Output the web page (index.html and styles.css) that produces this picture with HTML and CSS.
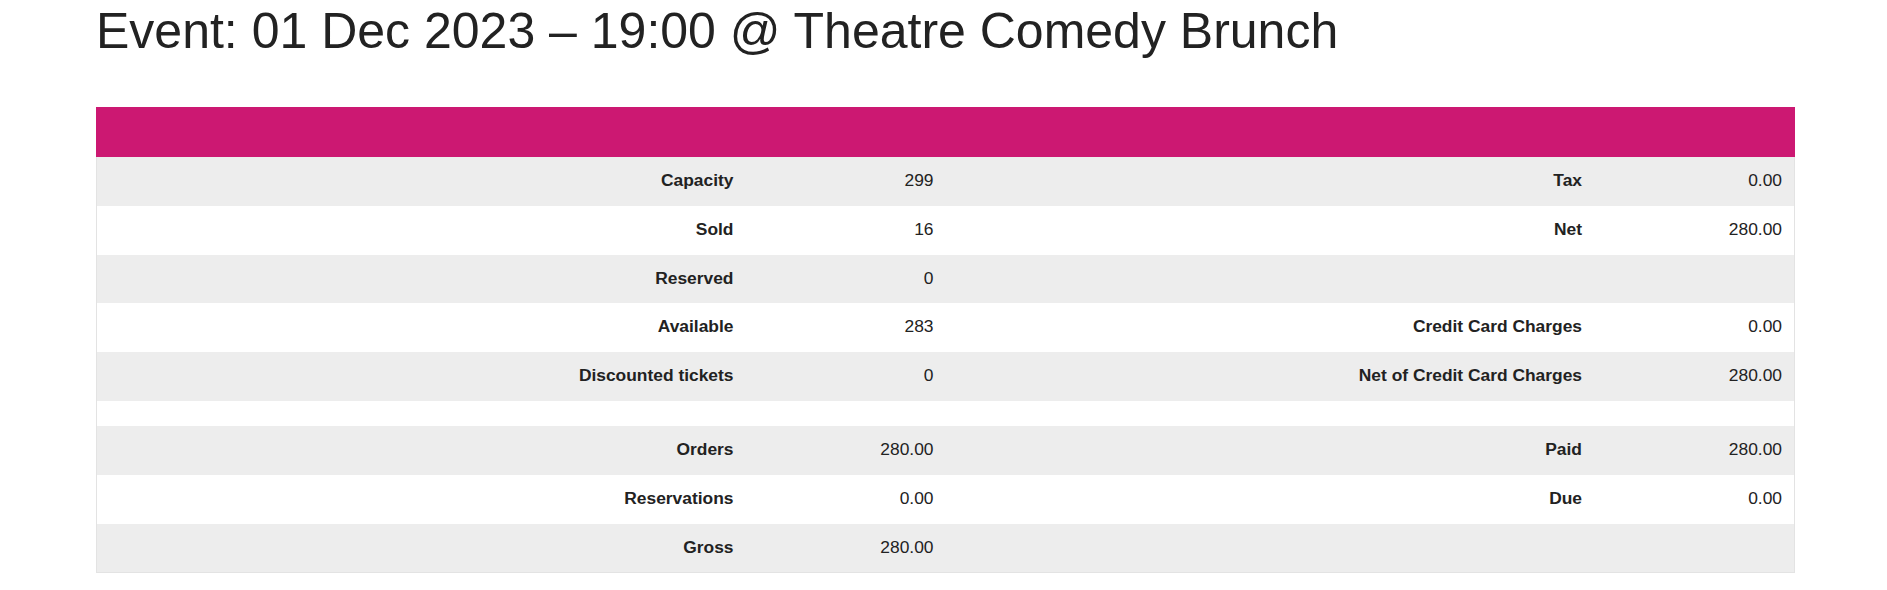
FILE: index.html
```html
<!DOCTYPE html>
<html lang="en">
<head>
    <meta charset="UTF-8">
    <meta name="viewport" content="width=device-width, initial-scale=1.0">
    <title>Event Summary</title>
    <link rel="stylesheet" href="styles.css">
</head>
<body>
<div class="page">
    <h1 class="event-title">Event: 01 Dec 2023 &ndash; 19:00 @ Theatre Comedy Brunch</h1>

    <div class="summary">
        <div class="summary-head"></div>

        <div class="row">
            <div class="label">Capacity</div><div class="value">299</div>
            <div class="label">Tax</div><div class="value">0.00</div>
        </div>
        <div class="row">
            <div class="label">Sold</div><div class="value">16</div>
            <div class="label">Net</div><div class="value">280.00</div>
        </div>
        <div class="row">
            <div class="label">Reserved</div><div class="value">0</div>
            <div class="label"></div><div class="value"></div>
        </div>
        <div class="row">
            <div class="label">Available</div><div class="value">283</div>
            <div class="label">Credit Card Charges</div><div class="value">0.00</div>
        </div>
        <div class="row">
            <div class="label">Discounted tickets</div><div class="value">0</div>
            <div class="label">Net of Credit Card Charges</div><div class="value">280.00</div>
        </div>

        <div class="spacer"></div>

        <div class="row">
            <div class="label">Orders</div><div class="value">280.00</div>
            <div class="label">Paid</div><div class="value">280.00</div>
        </div>
        <div class="row">
            <div class="label">Reservations</div><div class="value">0.00</div>
            <div class="label">Due</div><div class="value">0.00</div>
        </div>
        <div class="row">
            <div class="label">Gross</div><div class="value">280.00</div>
            <div class="label"></div><div class="value"></div>
        </div>
    </div>
</div>
</body>
</html>
```

FILE: styles.css
```css
body {
    font-family: "Liberation Sans", Arial, sans-serif;
    margin: 0;
    background-color: #fff;
    color: #222;
}

.page {
    padding: 3px 92px 0 96px;
}

.event-title {
    margin: 0 0 48px 0;
    font-size: 50px;
    font-weight: normal;
    line-height: 56px;
    color: #222;
}

.summary {
    border: 1px solid #e3e3e3;
    border-top: none;
}

.summary-head {
    height: 50px;
    background-color: #cc1872;
    margin: 0 -1px;
}

.row {
    display: grid;
    grid-template-columns: 1fr 200px 1fr 200px;
    font-size: 17.4px;
    line-height: 24.8px;
}

.row:nth-of-type(even) {
    background-color: #ededed;
}

.spacer {
    height: 25px;
}

.spacer + .row,
.spacer + .row + .row + .row {
    background-color: #ededed;
}

.spacer + .row + .row {
    background-color: #fff;
}

.label,
.value {
    padding: 11px 12px 13px 12px;
    text-align: right;
    min-height: 24.8px;
}

.label {
    font-weight: bold;
}
```
